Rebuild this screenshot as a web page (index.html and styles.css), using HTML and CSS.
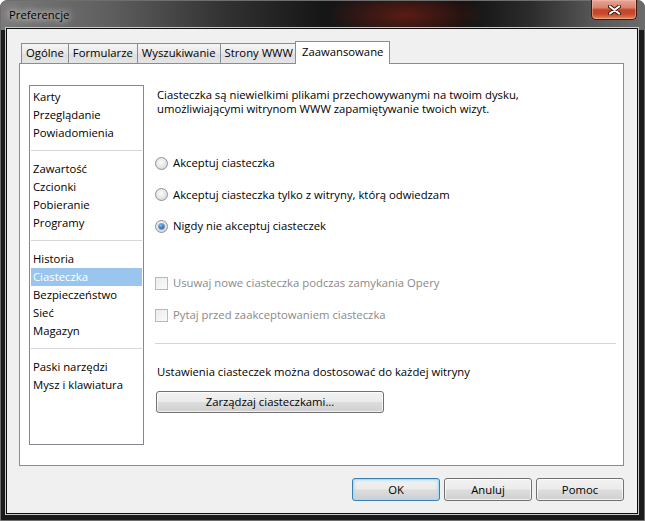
FILE: index.html
```html
<!DOCTYPE html>
<html lang="pl">
<head>
<meta charset="utf-8">
<title>Preferencje</title>
<link rel="stylesheet" href="styles.css">
</head>
<body>
<div class="window">
  <div class="titlebar">
    <span class="title">Preferencje</span>
    <div class="close">
      <svg width="13" height="10" viewBox="0 0 13 10">
        <path d="M2 1.5 L11 8.5 M11 1.5 L2 8.5" stroke="#3a1810" stroke-width="4" stroke-linecap="round" fill="none"/>
        <path d="M2 1.5 L11 8.5 M11 1.5 L2 8.5" stroke="#ffffff" stroke-width="2.2" stroke-linecap="round" fill="none"/>
      </svg>
    </div>
  </div>
  <div class="client">
    <div class="tabs">
      <div class="tab">Ogólne</div>
      <div class="tab">Formularze</div>
      <div class="tab">Wyszukiwanie</div>
      <div class="tab">Strony WWW</div>
      <div class="tab active">Zaawansowane</div>
    </div>
    <div class="panel">
      <ul class="list">
        <li>Karty</li>
        <li>Przeglądanie</li>
        <li>Powiadomienia</li>
        <li class="sep"></li>
        <li>Zawartość</li>
        <li>Czcionki</li>
        <li>Pobieranie</li>
        <li>Programy</li>
        <li class="sep"></li>
        <li>Historia</li>
        <li class="selected">Ciasteczka</li>
        <li>Bezpieczeństwo</li>
        <li>Sieć</li>
        <li>Magazyn</li>
        <li class="sep"></li>
        <li>Paski narzędzi</li>
        <li>Mysz i klawiatura</li>
      </ul>
      <div class="content">
        <p class="intro">Ciasteczka są niewielkimi plikami przechowywanymi na twoim dysku,<br>umożliwiającymi witrynom WWW zapamiętywanie twoich wizyt.</p>
        <div class="radios">
          <div class="option"><span class="radio"></span>Akceptuj ciasteczka</div>
          <div class="option"><span class="radio"></span>Akceptuj ciasteczka tylko z witryny, którą odwiedzam</div>
          <div class="option"><span class="radio checked"></span>Nigdy nie akceptuj ciasteczek</div>
        </div>
        <div class="checks">
          <div class="option disabled"><span class="check"></span>Usuwaj nowe ciasteczka podczas zamykania Opery</div>
          <div class="option disabled"><span class="check"></span>Pytaj przed zaakceptowaniem ciasteczka</div>
        </div>
        <div class="hr"></div>
        <p class="note">Ustawienia ciasteczek można dostosować do każdej witryny</p>
        <div class="btn manage">Zarządzaj ciasteczkami...</div>
      </div>
    </div>
    <div class="actions">
      <div class="btn default">OK</div>
      <div class="btn">Anuluj</div>
      <div class="btn">Pomoc</div>
    </div>
  </div>
</div>
</body>
</html>
```
FILE: styles.css
```css
* { box-sizing: border-box; }
html, body { margin: 0; padding: 0; }
body {
  width: 645px;
  height: 521px;
  background: #ffffff;
  font-family: "Open Sans", "Noto Sans", sans-serif;
  font-size: 11.3px;
  color: #000;
  overflow: hidden;
}
.window {
  width: 645px;
  height: 521px;
  border: 1px solid #6e6e6e;
  border-radius: 7px 7px 0 0;
  padding: 0 7px 7px 6px;
  display: flex;
  flex-direction: column;
  background:
    radial-gradient(ellipse 80px 26px at 405px 14px, rgba(150, 35, 20, 0.55), rgba(150, 35, 20, 0) 100%),
    linear-gradient(90deg, #7a7a7a 0px, #5e5e5e 110px, #333 220px, #161616 320px, #101010 460px, #2c2c2c 530px, #555 590px, #6c6c6c 645px);
  background-size: 100% 29px, 100% 29px;
  background-repeat: no-repeat;
  background-color: #1b1b1b;
}
.titlebar {
  height: 28px;
  display: flex;
  align-items: flex-start;
  flex: none;
}
.title {
  margin: 6px 0 0 2px;
  font-size: 11.3px;
  line-height: 16px;
  color: #000;
  text-shadow: 0 0 6px rgba(255,255,255,0.9), 0 0 10px rgba(255,255,255,0.6), 0 0 14px rgba(255,255,255,0.4);
}
.close {
  margin-left: auto;
  width: 46px;
  height: 20px;
  margin-top: -1px;
  border: 1px solid #3c1a12;
  border-top: none;
  border-radius: 0 0 5px 5px;
  background: linear-gradient(#e7a698 0%, #d9826e 40%, #c3452a 52%, #c84b2a 75%, #e38a5c 100%);
  box-shadow: inset 0 0 0 1px rgba(255, 200, 180, 0.45);
  display: flex;
  align-items: center;
  justify-content: center;
}
.client {
  flex: 1;
  background: #f0f0f0;
  box-shadow: 0 0 0 1px #0e0e0e, 0 0 0 2px #c8c8c8;
  padding: 12px 13px 12px 12px;
  display: flex;
  flex-direction: column;
}
.tabs {
  height: 22px;
  display: flex;
  align-items: flex-end;
  padding-left: 2px;
  position: relative;
  z-index: 1;
}
.tab {
  height: 20px;
  line-height: 18px;
  padding: 0 4px;
  border: 1px solid #898c95;
  border-bottom: none;
  margin-right: -1px;
  background: linear-gradient(#f5f5f5, #e8e8e8 50%, #dedede 51%, #e4e4e4);
  white-space: nowrap;
}
.tab.active {
  height: 23px;
  margin: 0 -1px -1px -2px;
  padding: 0 6px;
  line-height: 20px;
  background: #fff;
}
.panel {
  height: 403px;
  border: 1px solid #898c95;
  background: #fff;
  display: flex;
  padding: 21px 7px 0 9px;
}
.list {
  list-style: none;
  margin: 0;
  padding: 2px 1px;
  width: 115px;
  height: 360px;
  border: 1px solid #828790;
  flex: none;
}
.list li {
  height: 18px;
  line-height: 18px;
  padding-left: 2px;
  white-space: nowrap;
}
.list li.selected {
  background: #9ac6ee;
  color: #fff;
}
.list li.sep {
  display: flex;
  align-items: center;
  padding: 0;
}
.list li.sep::before {
  content: "";
  display: block;
  width: 100%;
  height: 1px;
  margin-top: -1px;
  background: #d6d6d6;
}
.content {
  margin-left: 11px;
  flex: 1;
  padding-top: 3px;
}
.intro {
  margin: 0 0 0 2px;
  line-height: 14px;
}
.radios {
  margin-top: 39px;
  display: flex;
  flex-direction: column;
  gap: 15.5px;
}
.option {
  height: 16px;
  line-height: 16px;
  display: flex;
  align-items: center;
  white-space: nowrap;
}
.radio {
  width: 13px;
  height: 13px;
  border-radius: 50%;
  border: 1px solid #8f9195;
  background: radial-gradient(circle at 45% 40%, #fbfbfb 0%, #e4e4e4 55%, #cfcfcf 90%);
  margin-right: 5px;
  flex: none;
  display: flex;
  align-items: center;
  justify-content: center;
}
.radio.checked::before {
  content: "";
  width: 5px;
  height: 5px;
  border-radius: 50%;
  background: radial-gradient(circle at 40% 35%, #8fd0ff 0%, #2a7fcf 45%, #0f4a8c 100%);
  box-shadow: 0 0 0 1px rgba(30, 80, 140, 0.5);
}
.checks {
  margin-top: 41px;
  display: flex;
  flex-direction: column;
  gap: 16px;
}
.check {
  width: 13px;
  height: 13px;
  border: 1px solid #b9b9b9;
  background: linear-gradient(135deg, #ececec, #fafafa);
  margin-right: 5px;
  flex: none;
}
.option.disabled { color: #8a8a8a; }
.hr {
  margin-top: 20px;
  height: 1px;
  background: #d5d5d5;
}
.note {
  margin: 20px 0 0 2px;
  line-height: 16px;
}
.btn {
  height: 22px;
  line-height: 20px;
  text-align: center;
  border: 1px solid #707070;
  border-radius: 3px;
  background: linear-gradient(#f2f2f2 0%, #ebebeb 48%, #dddddd 52%, #cfcfcf 100%);
  box-shadow: inset 0 0 0 1px rgba(255, 255, 255, 0.75);
}
.manage {
  margin: 11px 0 0 1px;
  width: 228px;
}
.actions {
  margin-top: 12px;
  display: flex;
  justify-content: flex-end;
  gap: 4px;
}
.actions .btn {
  width: 88px;
  height: 23px;
  line-height: 21px;
}
.actions .btn.default {
  border-color: #3c7fb1;
  box-shadow: inset 0 0 0 1px #a6dcf5, inset 0 0 2px 2px rgba(170, 220, 245, 0.5);
}
```
